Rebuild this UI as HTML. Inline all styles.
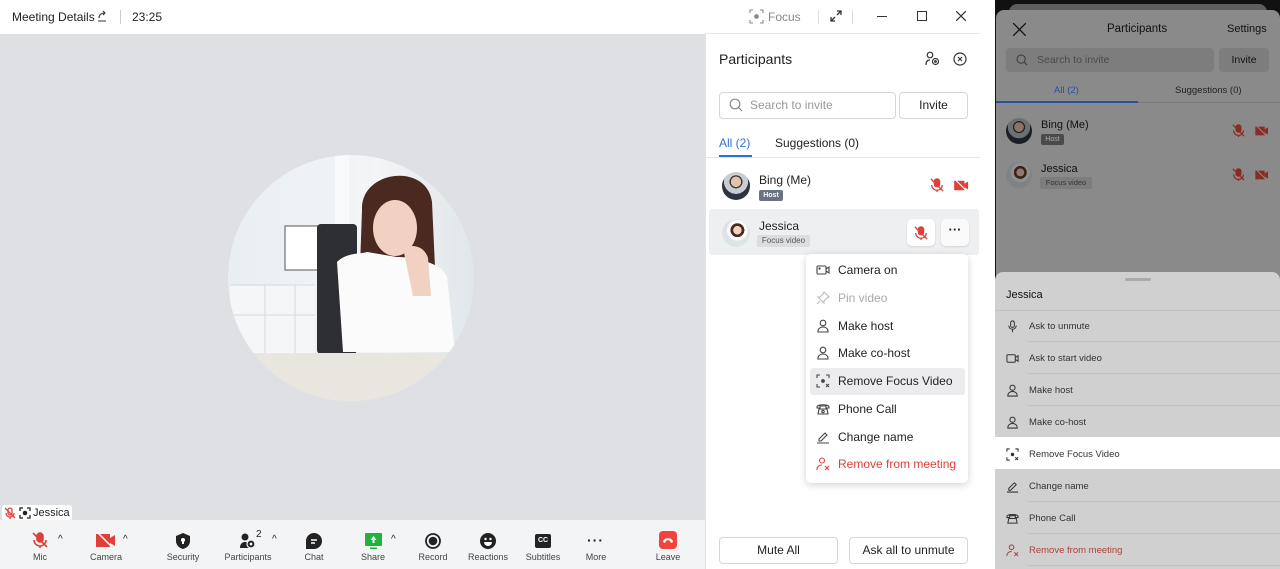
<!DOCTYPE html>
<html><head><meta charset="utf-8"><style>
*{box-sizing:border-box;margin:0;padding:0}
body{width:1280px;height:569px;overflow:hidden;background:#fff;font-family:"Liberation Sans",sans-serif;color:#222;position:relative}
.a{position:absolute}
.t{font-size:12px;white-space:nowrap}
.tb{font-size:9px;color:#444;text-align:center;width:60px;position:absolute}
.mi{position:absolute;left:816px;font-size:12px;color:#222;display:flex;align-items:center;gap:8px}
.mi svg{width:14px;height:14px}
.mr{position:absolute;left:995px;width:285px;height:32px;font-size:9.5px;color:#333;display:flex;align-items:center;padding-left:11px;gap:10px}
.mr svg{width:13px;height:13px}
</style></head><body>
<div class="a t" style="left:12px;top:10px;font-size:12px">Meeting Details</div>
<svg class="a" style="left:96px;top:10px" width="12" height="12" viewBox="0 0 12 12" fill="none" stroke="#333" stroke-width="1.1"><path d="M2 11h8M3 8c0-3 2-5 6-5M7 1l2 2-2 2"/></svg>
<div class="a" style="left:120px;top:10px;width:1px;height:14px;background:#ccc"></div>
<div class="a t" style="left:132px;top:10px">23:25</div>
<svg class="a" style="left:749px;top:9px" width="15" height="15" viewBox="0 0 15 15" fill="none" stroke="#888" stroke-width="1.1"><path d="M1 4V1h3M11 1h3v3M14 11v3h-3M4 14H1v-3"/><circle cx="7.5" cy="7.5" r="1.8" fill="#888"/></svg>
<div class="a t" style="left:768px;top:10px;color:#888">Focus</div>
<div class="a" style="left:818px;top:10px;width:1px;height:14px;background:#ddd"></div>
<svg class="a" style="left:830px;top:10px" width="12" height="12" viewBox="0 0 12 12" fill="none" stroke="#333" stroke-width="1.3"><path d="M7 1h4v4M11 1L7 5M5 11H1V7M1 11l4-4"/></svg>
<div class="a" style="left:852px;top:10px;width:1px;height:14px;background:#ddd"></div>
<div class="a" style="left:877px;top:16px;width:10px;height:1.2px;background:#333"></div>
<div class="a" style="left:917px;top:11px;width:10px;height:10px;border:1.2px solid #333"></div>
<svg class="a" style="left:956px;top:11px" width="10" height="10" viewBox="0 0 10 10" stroke="#333" stroke-width="1.2"><path d="M0 0L10 10M10 0L0 10"/></svg>
<div class="a" style="left:0;top:34px;width:705px;height:486px;background:#dfe0e3"></div>
<svg class="a" style="left:225px;top:150px" width="255" height="255" viewBox="0 0 255 255">
<defs><clipPath id="c"><circle cx="126" cy="128" r="123"/></clipPath>
<linearGradient id="bg" x1="0" x2="1"><stop offset="0" stop-color="#e8eef2"/><stop offset=".6" stop-color="#f3f5f6"/><stop offset="1" stop-color="#dfe5e9"/></linearGradient></defs>
<g clip-path="url(#c)">
<rect width="255" height="255" fill="url(#bg)"/>
<rect x="110" y="0" width="14" height="210" fill="#f8f9fa"/>
<rect x="60" y="76" width="33" height="44" fill="#fff" stroke="#555" stroke-width="1"/>
<rect x="5" y="135" width="85" height="70" fill="#f4f6f7"/>
<path d="M5 135h85M5 165h85M40 135v70M70 135v70" stroke="#d5dadd"/>
<rect x="92" y="74" width="40" height="130" rx="4" fill="#2d2f33"/>
<path d="M137 60c-2-40 65-48 70-8l3 65h-75z" fill="#4a2a20"/>
<ellipse cx="170" cy="78" rx="22" ry="28" fill="#f1d2c2"/>
<path d="M145 55c3-25 48-30 55-2c-8-12-40-16-55 2z" fill="#4a2a20"/>
<path d="M112 112c10-10 25-8 30-10l30 5c15 0 45 5 50 20l8 75H118z" fill="#fbfbfb"/>
<path d="M178 98c12-5 22 0 25 10l3 38-18 0z" fill="#f1d2c2"/>
<rect x="0" y="203" width="255" height="55" fill="#e9e6df"/>
</g></svg>
<div class="a" style="left:2px;top:505px;width:70px;height:16px;background:#fff;border-radius:3px"></div>
<svg class="a" style="left:4px;top:507px" width="12" height="12" viewBox="0 0 12 12" fill="none" stroke="#e0403a" stroke-width="1.3"><rect x="4" y="1" width="4" height="7" rx="2"/><path d="M2 6a4 4 0 008 0M6 10v2M1 1l10 10"/></svg>
<svg class="a" style="left:19px;top:507px" width="12" height="12" viewBox="0 0 12 12" fill="none" stroke="#222" stroke-width="1.3"><path d="M1 4V1h3M8 1h3v3M11 8v3H8M4 11H1V8"/><circle cx="6" cy="6" r="1.6" fill="#222"/></svg>
<div class="a" style="left:33px;top:507px;font-size:11px">Jessica</div>
<div class="a" style="left:0;top:520px;width:705px;height:49px;background:#f3f4f6"></div>
<svg class="a" style="left:32px;top:532px" width="16" height="16" viewBox="0 0 16 16" fill="none" stroke="#e0403a" stroke-width="1.6"><rect x="5" y="1" width="6" height="9" rx="3" fill="#e0403a"/><path d="M2 8a6 6 0 0012 0M8 14v2M1 1l14 14"/></svg>
<div class="a" style="left:58px;top:534px;font-size:10px">^</div>
<div class="tb" style="left:10px;top:552px">Mic</div>
<svg class="a" style="left:96px;top:533px" width="20" height="15" viewBox="0 0 20 15"><rect x="0" y="1" width="14" height="13" fill="#e0403a"/><path d="M14 5l5-3v11l-5-3z" fill="#e0403a"/><path d="M2 0l15 15" stroke="#f3f4f6" stroke-width="1.5"/></svg>
<div class="a" style="left:123px;top:534px;font-size:10px">^</div>
<div class="tb" style="left:76px;top:552px">Camera</div>
<svg class="a" style="left:176px;top:533px" width="14" height="16" viewBox="0 0 14 16"><path d="M7 0l7 3v5c0 4-3 7-7 8C3 15 0 12 0 8V3z" fill="#222"/><circle cx="7" cy="7" r="2" fill="#fff"/><rect x="6" y="8" width="2" height="3" fill="#fff"/></svg>
<div class="tb" style="left:153px;top:552px">Security</div>
<svg class="a" style="left:240px;top:533px" width="18" height="16" viewBox="0 0 18 16" fill="#222"><circle cx="5" cy="4" r="3.5"/><path d="M0 15c0-5 3-6 5-6s5 1 5 6z"/><circle cx="11" cy="11" r="4" fill="#222" stroke="#f3f4f6" stroke-width="1.2"/><circle cx="11" cy="11" r="1.4" fill="#fff"/></svg>
<div class="a" style="left:256px;top:529px;font-size:10px">2</div>
<div class="a" style="left:272px;top:534px;font-size:10px">^</div>
<div class="tb" style="left:218px;top:552px">Participants</div>
<svg class="a" style="left:306px;top:533px" width="16" height="16" viewBox="0 0 16 16"><path d="M8 0a8 8 0 110 16H0V8a8 8 0 018-8z" fill="#222"/><path d="M5 7h6M5 10h4" stroke="#fff" stroke-width="1.4"/></svg>
<div class="tb" style="left:284px;top:552px">Chat</div>
<svg class="a" style="left:365px;top:533px" width="17" height="17" viewBox="0 0 17 17"><rect x="0" y="0" width="17" height="13" rx="1" fill="#1fb43c"/><path d="M8.5 3l3 4h-2v3h-2V7h-2z" fill="#fff"/><rect x="5" y="14.5" width="7" height="1.5" fill="#1fb43c"/></svg>
<div class="a" style="left:391px;top:534px;font-size:10px">^</div>
<div class="tb" style="left:343px;top:552px">Share</div>
<svg class="a" style="left:425px;top:533px" width="16" height="16" viewBox="0 0 16 16"><circle cx="8" cy="8" r="7" fill="none" stroke="#222" stroke-width="1.8"/><circle cx="8" cy="8" r="4.3" fill="#222"/></svg>
<div class="tb" style="left:403px;top:552px">Record</div>
<svg class="a" style="left:480px;top:533px" width="16" height="16" viewBox="0 0 16 16"><circle cx="8" cy="8" r="8" fill="#222"/><circle cx="5.5" cy="6" r="1.2" fill="#fff"/><circle cx="10.5" cy="6" r="1.2" fill="#fff"/><path d="M4 9h8a4 4 0 01-8 0z" fill="#fff"/></svg>
<div class="tb" style="left:458px;top:552px">Reactions</div>
<div class="a" style="left:535px;top:534px;width:16px;height:14px;background:#222;border-radius:2px;color:#fff;font-size:7px;font-weight:bold;text-align:center;line-height:14px">CC</div>
<div class="tb" style="left:513px;top:552px">Subtitles</div>
<div class="a" style="left:587px;top:532px;font-size:14px;letter-spacing:1px;font-weight:bold">···</div>
<div class="tb" style="left:566px;top:552px">More</div>
<div class="a" style="left:659px;top:531px;width:18px;height:18px;background:#f0453f;border-radius:4px"></div>
<svg class="a" style="left:662px;top:536px" width="12" height="8" viewBox="0 0 12 8"><path d="M1 6c0-5 10-5 10 0l-2 1-1-2c-1-1-3-1-4 0l-1 2z" fill="#fff"/></svg>
<div class="tb" style="left:638px;top:552px">Leave</div>
<div class="a" style="left:705px;top:34px;width:1px;height:535px;background:#e3e3e3"></div>
<div class="a" style="left:705px;top:33px;width:275px;height:1px;background:#e8e8e8"></div>
<div class="a" style="left:719px;top:51px;font-size:14px">Participants</div>
<svg class="a" style="left:925px;top:51px" width="15" height="15" viewBox="0 0 15 15" fill="none" stroke="#333" stroke-width="1.2"><circle cx="5" cy="4" r="2.8"/><path d="M1 14c0-4 2-5 4-5"/><circle cx="10.5" cy="10.5" r="3"/><circle cx="10.5" cy="10.5" r=".8" fill="#333"/></svg>
<svg class="a" style="left:953px;top:52px" width="14" height="14" viewBox="0 0 14 14" fill="none" stroke="#333" stroke-width="1.2"><circle cx="7" cy="7" r="6"/><path d="M5 5l4 4M9 5l-4 4"/></svg>
<div class="a" style="left:719px;top:92px;width:177px;height:27px;border:1px solid #d6d6d6;border-radius:4px"></div>
<svg class="a" style="left:729px;top:98px" width="14" height="14" viewBox="0 0 14 14" fill="none" stroke="#888" stroke-width="1.2"><circle cx="6" cy="6" r="4.8"/><path d="M9.5 9.5L13 13"/></svg>
<div class="a t" style="left:750px;top:98px;color:#999">Search to invite</div>
<div class="a" style="left:899px;top:92px;width:69px;height:27px;border:1px solid #d6d6d6;border-radius:4px;font-size:12px;text-align:center;line-height:25px">Invite</div>
<div class="a t" style="left:719px;top:136px;color:#2f6fdc">All (2)</div>
<div class="a t" style="left:775px;top:136px">Suggestions (0)</div>
<div class="a" style="left:705px;top:157px;width:275px;height:1px;background:#e6e6e6"></div>
<div class="a" style="left:719px;top:155px;width:33px;height:2px;background:#2f6fdc"></div>
<div class="a" style="left:722px;top:172px;width:28px;height:28px;border-radius:50%;background:radial-gradient(circle at 50% 35%,#e3c2ab 0 22%,#3a3a3a 23% 28%,#c9ccd0 29% 52%,#2b3240 53%)"></div>
<div class="a t" style="left:759px;top:173px">Bing (Me)</div>
<div class="a" style="left:759px;top:190px;width:24px;height:11px;background:#6b7280;border-radius:2px;color:#fff;font-size:7px;font-weight:bold;text-align:center;line-height:11px">Host</div>
<svg class="a" style="left:930px;top:178px" width="14" height="14" viewBox="0 0 16 16" fill="none" stroke="#e0403a" stroke-width="1.5"><rect x="5" y="1" width="6" height="9" rx="3" fill="#e0403a"/><path d="M2 8a6 6 0 0012 0M8 14v2M1 1l14 14"/></svg>
<svg class="a" style="left:954px;top:180px" width="15" height="11" viewBox="0 0 20 15"><rect x="0" y="1" width="14" height="13" fill="#e0403a"/><path d="M14 5l5-3v11l-5-3z" fill="#e0403a"/><path d="M2 0l15 15" stroke="#fff" stroke-width="1.5"/></svg>
<div class="a" style="left:709px;top:209px;width:270px;height:46px;background:#eeeff1;border-radius:3px"></div>
<div class="a" style="left:722px;top:219px;width:28px;height:28px;border-radius:50%;background:radial-gradient(circle at 55% 40%,#f1d2c2 0 18%,#4a2a20 19% 30%,#fafafa 31% 45%,#dde4e8 46%)"></div>
<div class="a t" style="left:759px;top:219px">Jessica</div>
<div class="a" style="left:757px;top:235px;width:53px;height:12px;background:#dcdde0;border-radius:2px;color:#555;font-size:8px;text-align:center;line-height:12px">Focus video</div>
<div class="a" style="left:907px;top:219px;width:28px;height:27px;background:#fff;border-radius:5px;box-shadow:0 1px 2px rgba(0,0,0,.12)"></div>
<svg class="a" style="left:914px;top:226px" width="14" height="14" viewBox="0 0 16 16" fill="none" stroke="#e0403a" stroke-width="1.5"><rect x="5" y="1" width="6" height="9" rx="3" fill="#e0403a"/><path d="M2 8a6 6 0 0012 0M8 14v2M1 1l14 14"/></svg>
<div class="a" style="left:941px;top:219px;width:28px;height:27px;background:#fafafa;border-radius:5px;box-shadow:0 1px 2px rgba(0,0,0,.12);text-align:center;font-weight:bold;font-size:13px;line-height:22px">···</div>
<div class="a" style="left:806px;top:254px;width:162px;height:229px;background:#fff;border-radius:5px;box-shadow:0 2px 8px rgba(0,0,0,.18)"></div>
<div class="a" style="left:810px;top:368px;width:155px;height:27px;background:#ececee;border-radius:3px"></div>
<div class="mi" style="top:263px"><svg viewBox="0 0 14 14" fill="none" stroke="#444" stroke-width="1.1"><rect x="1" y="3" width="9" height="8" rx="1"/><path d="M10 6l3-2v6l-3-2"/><circle cx="3.5" cy="5.5" r=".6" fill="#444"/></svg>Camera on</div>
<div class="mi" style="top:291px;color:#aaa"><svg viewBox="0 0 14 14" fill="none" stroke="#bbb" stroke-width="1.1"><path d="M8 1l5 5-2 1-3 3v2L2 6h2l3-3z M4 10l-3 3"/></svg>Pin video</div>
<div class="mi" style="top:319px"><svg viewBox="0 0 14 14" fill="none" stroke="#444" stroke-width="1.1"><circle cx="7" cy="4" r="2.8"/><path d="M2 13v-1c0-2 2-4 5-4s5 2 5 4v1z"/></svg>Make host</div>
<div class="mi" style="top:346px"><svg viewBox="0 0 14 14" fill="none" stroke="#444" stroke-width="1.1"><circle cx="7" cy="4" r="2.8"/><path d="M2 13v-1c0-2 2-4 5-4s5 2 5 4v1z"/></svg>Make co-host</div>
<div class="mi" style="top:374px"><svg viewBox="0 0 14 14" fill="none" stroke="#444" stroke-width="1.1"><path d="M1 4V1h3M10 1h3v3M4 13H1v-3"/><circle cx="7" cy="7" r="1.3" fill="#444"/><path d="M10 10l3 3M13 10l-3 3"/></svg>Remove Focus Video</div>
<div class="mi" style="top:402px"><svg viewBox="0 0 14 14" fill="none" stroke="#444" stroke-width="1.1"><path d="M1 5c0-3 12-3 12 0v1h-3V4H4v2H1z"/><path d="M3 7h8l1 5H2z"/><circle cx="7" cy="9.5" r="1.2"/></svg>Phone Call</div>
<div class="mi" style="top:430px"><svg viewBox="0 0 14 14" fill="none" stroke="#444" stroke-width="1.1"><path d="M3 9l6-6 2 2-6 6H3zM1 13h12"/></svg>Change name</div>
<div class="mi" style="top:457px;color:#e0403a"><svg viewBox="0 0 14 14" fill="none" stroke="#e0403a" stroke-width="1.1"><circle cx="6" cy="3.5" r="2.5"/><path d="M1 13v-1c0-2 2-4 5-4"/><path d="M9 9l4 4M13 9l-4 4"/></svg>Remove from meeting</div>
<div class="a" style="left:719px;top:537px;width:119px;height:27px;border:1px solid #d6d6d6;border-radius:4px;font-size:12px;text-align:center;line-height:25px">Mute All</div>
<div class="a" style="left:849px;top:537px;width:119px;height:27px;border:1px solid #d6d6d6;border-radius:4px;font-size:12px;text-align:center;line-height:25px">Ask all to unmute</div>
<div class="a" style="left:995px;top:0;width:285px;height:569px;background:#111"></div>
<div class="a" style="left:1009px;top:4px;width:258px;height:20px;background:#5e5e5e;border-radius:8px"></div>
<div class="a" style="left:996px;top:10px;width:284px;height:280px;background:#8a8a8a;border-radius:8px 8px 0 0"></div>
<svg class="a" style="left:1013px;top:23px" width="13" height="13" viewBox="0 0 13 13" stroke="#111" stroke-width="1.3"><path d="M0 0l13 13M13 0L0 13"/></svg>
<div class="a" style="left:1107px;top:23px;font-size:11.5px;color:#111">Participants</div>
<div class="a" style="left:1227px;top:23px;font-size:11px;color:#111">Settings</div>
<div class="a" style="left:1006px;top:48px;width:208px;height:24px;background:#7d7d7d;border-radius:4px"></div>
<svg class="a" style="left:1016px;top:54px" width="12" height="12" viewBox="0 0 14 14" fill="none" stroke="#3a3a3a" stroke-width="1.2"><circle cx="6" cy="6" r="4.8"/><path d="M9.5 9.5L13 13"/></svg>
<div class="a" style="left:1037px;top:54px;font-size:10.5px;color:#4a4a4a">Search to invite</div>
<div class="a" style="left:1219px;top:48px;width:50px;height:24px;background:#7d7d7d;border-radius:4px;font-size:10.5px;color:#111;text-align:center;line-height:24px">Invite</div>
<div class="a" style="left:1054px;top:85px;font-size:9.5px;color:#2a4fa0">All (2)</div>
<div class="a" style="left:1175px;top:85px;font-size:9.5px;color:#222">Suggestions (0)</div>
<div class="a" style="left:996px;top:102px;width:284px;height:1px;background:#7a7a7a"></div>
<div class="a" style="left:996px;top:101px;width:142px;height:2px;background:#2a4fa0"></div>
<div class="a" style="left:1006px;top:118px;width:26px;height:26px;border-radius:50%;background:radial-gradient(circle at 50% 35%,#8b7467 0 22%,#222 23% 28%,#6e7074 29% 52%,#1b2028 53%)"></div>
<div class="a" style="left:1041px;top:119px;font-size:11px;color:#111">Bing (Me)</div>
<div class="a" style="left:1041px;top:134px;width:23px;height:11px;background:#4a4a4a;border-radius:2px;color:#aaa;font-size:7px;text-align:center;line-height:11px">Host</div>
<div class="a" style="left:1006px;top:162px;width:26px;height:26px;border-radius:50%;background:radial-gradient(circle at 55% 40%,#8d7a70 0 18%,#3a2219 19% 30%,#8f8f8f 31% 45%,#7f8386 46%)"></div>
<div class="a" style="left:1041px;top:163px;font-size:11px;color:#111">Jessica</div>
<div class="a" style="left:1040px;top:177px;width:52px;height:12px;background:#7d7d7d;border-radius:2px;color:#333;font-size:7.5px;text-align:center;line-height:12px">Focus video</div>
<svg class="a" style="left:1232px;top:124px" width="13" height="13" viewBox="0 0 16 16" fill="none" stroke="#8a2b26" stroke-width="1.5"><rect x="5" y="1" width="6" height="9" rx="3" fill="#8a2b26"/><path d="M2 8a6 6 0 0012 0M8 14v2M1 1l14 14"/></svg>
<svg class="a" style="left:1255px;top:126px" width="14" height="10" viewBox="0 0 20 15"><rect x="0" y="1" width="14" height="13" fill="#8a2b26"/><path d="M14 5l5-3v11l-5-3z" fill="#8a2b26"/><path d="M2 0l15 15" stroke="#8a8a8a" stroke-width="1.5"/></svg>
<svg class="a" style="left:1232px;top:168px" width="13" height="13" viewBox="0 0 16 16" fill="none" stroke="#8a2b26" stroke-width="1.5"><rect x="5" y="1" width="6" height="9" rx="3" fill="#8a2b26"/><path d="M2 8a6 6 0 0012 0M8 14v2M1 1l14 14"/></svg>
<svg class="a" style="left:1255px;top:170px" width="14" height="10" viewBox="0 0 20 15"><rect x="0" y="1" width="14" height="13" fill="#8a2b26"/><path d="M14 5l5-3v11l-5-3z" fill="#8a2b26"/><path d="M2 0l15 15" stroke="#8a8a8a" stroke-width="1.5"/></svg>
<div class="a" style="left:996px;top:200px;width:284px;height:72px;background:#8a8a8a"></div>
<div class="a" style="left:995px;top:272px;width:285px;height:297px;background:#d0d0d0;border-radius:8px 8px 0 0"></div>
<div class="a" style="left:1125px;top:278px;width:26px;height:3px;background:#aaa;border-radius:2px"></div>
<div class="a" style="left:1006px;top:289px;font-size:11px;color:#111">Jessica</div>
<div class="a" style="left:995px;top:310px;width:285px;height:1px;background:#c2c2c2"></div>
<div class="a" style="left:995px;top:437px;width:285px;height:32px;background:#fff"></div>
<div class="mr" style="top:310px"><svg viewBox="0 0 14 14" fill="none" stroke="#333" stroke-width="1.1"><rect x="5" y="1" width="4" height="7" rx="2"/><path d="M3 6a4 4 0 008 0M7 10v3"/></svg>Ask to unmute</div>
<div class="mr" style="top:342px"><svg viewBox="0 0 14 14" fill="none" stroke="#333" stroke-width="1.1"><rect x="1" y="3" width="9" height="8" rx="1"/><path d="M10 6l3-2v6l-3-2"/></svg>Ask to start video</div>
<div class="mr" style="top:374px"><svg viewBox="0 0 14 14" fill="none" stroke="#333" stroke-width="1.1"><circle cx="7" cy="4" r="2.8"/><path d="M2 13v-1c0-2 2-4 5-4s5 2 5 4v1z"/></svg>Make host</div>
<div class="mr" style="top:406px"><svg viewBox="0 0 14 14" fill="none" stroke="#333" stroke-width="1.1"><circle cx="7" cy="4" r="2.8"/><path d="M2 13v-1c0-2 2-4 5-4s5 2 5 4v1z"/></svg>Make co-host</div>
<div class="mr" style="top:438px"><svg viewBox="0 0 14 14" fill="none" stroke="#333" stroke-width="1.1"><path d="M1 4V1h3M10 1h3v3M4 13H1v-3"/><circle cx="7" cy="7" r="1.3" fill="#333"/><path d="M10 10l3 3M13 10l-3 3"/></svg>Remove Focus Video</div>
<div class="mr" style="top:470px"><svg viewBox="0 0 14 14" fill="none" stroke="#333" stroke-width="1.1"><path d="M3 9l6-6 2 2-6 6H3zM1 13h12"/></svg>Change name</div>
<div class="mr" style="top:502px"><svg viewBox="0 0 14 14" fill="none" stroke="#333" stroke-width="1.1"><path d="M1 5c0-3 12-3 12 0v1h-3V4H4v2H1z"/><path d="M3 7h8l1 5H2z"/></svg>Phone Call</div>
<div class="mr" style="top:534px;color:#b0413b"><svg viewBox="0 0 14 14" fill="none" stroke="#b0413b" stroke-width="1.1"><circle cx="6" cy="3.5" r="2.5"/><path d="M1 13v-1c0-2 2-4 5-4M9 9l4 4M13 9l-4 4"/></svg>Remove from meeting</div>
<div class="a" style="left:1027px;top:341px;width:253px;height:1px;background:#c2c2c2"></div>
<div class="a" style="left:1027px;top:373px;width:253px;height:1px;background:#c2c2c2"></div>
<div class="a" style="left:1027px;top:405px;width:253px;height:1px;background:#c2c2c2"></div>
<div class="a" style="left:1027px;top:501px;width:253px;height:1px;background:#c2c2c2"></div>
<div class="a" style="left:1027px;top:533px;width:253px;height:1px;background:#c2c2c2"></div>
<div class="a" style="left:1027px;top:565px;width:253px;height:1px;background:#c2c2c2"></div>
</body></html>
